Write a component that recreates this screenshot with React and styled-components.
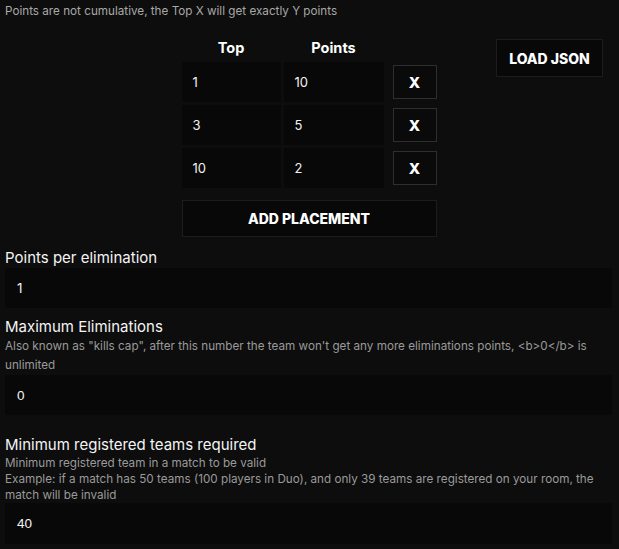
import React from 'react'
import styled, { createGlobalStyle } from 'styled-components'

const PLACEMENTS = [
  { top: 1, points: 10 },
  { top: 3, points: 5 },
  { top: 10, points: 2 },
]

const GlobalStyle = createGlobalStyle`
  html, body {
    margin: 0;
    background: #0d0d0d;
  }
  body {
    font-family: Inter, "Noto Sans", sans-serif;
    color: #eee;
  }
`

export default function App() {
  return (
    <>
      <GlobalStyle />
      <Wrapper>
        <Hint>Points are not cumulative, the Top X will get exactly Y points</Hint>

        <PlacementArea>
          <Table>
            <HeaderRow>
              <HeaderCell>Top</HeaderCell>
              <HeaderCell>Points</HeaderCell>
              <span />
            </HeaderRow>
            {PLACEMENTS.map((p, index) => (
              <Row key={index}>
                <Cell>{p.top}</Cell>
                <Cell>{p.points}</Cell>
                <RemoveButton>X</RemoveButton>
              </Row>
            ))}
            <AddButton>ADD PLACEMENT</AddButton>
          </Table>
          <LoadButton>LOAD JSON</LoadButton>
        </PlacementArea>

        <Field $gap="11px">
          <Label>Points per elimination</Label>
          <Input>1</Input>
        </Field>

        <Field $gap="9px">
          <Label>Maximum Eliminations</Label>
          <Help>
            Also known as "kills cap", after this number the team won't get any more
            eliminations points, &lt;b&gt;0&lt;/b&gt; is unlimited
          </Help>
          <Input $system>0</Input>
        </Field>

        <Field $gap="20px">
          <Label>Minimum registered teams required</Label>
          <Help $tight>
            Minimum registered team in a match to be valid
            <br />
            Example: if a match has 50 teams (100 players in Duo), and only 39 teams are
            registered on your room, the match will be invalid
          </Help>
          <Input $system $tall>40</Input>
        </Field>
      </Wrapper>
    </>
  )
}

const Wrapper = styled.div`
  width: 607px;
  padding: 4px 7px 0 5px;
`

const Hint = styled.div`
  font-size: 11.7px;
  line-height: 14px;
  color: #a8a8a8;
`

const PlacementArea = styled.div`
  display: grid;
  grid-template-columns: 1fr auto 1fr;
  margin-top: 18px;
`

const Table = styled.div`
  grid-column: 2;
  display: flex;
  flex-direction: column;
  gap: 3px;
  margin-left: 1px;
`

const HeaderRow = styled.div`
  display: grid;
  grid-template-columns: 99px 100px 50px;
  gap: 3px;
  height: 23px;
  align-items: center;
`

const HeaderCell = styled.div`
  text-align: center;
  font-weight: 700;
  font-size: 14.5px;
  color: #fff;
`

const Row = styled.div`
  display: grid;
  grid-template-columns: 99px 100px 50px;
  gap: 3px;
  height: 40px;
  align-items: center;
`

const Cell = styled.div`
  height: 40px;
  box-sizing: border-box;
  background: #080808;
  padding-left: 11px;
  display: flex;
  align-items: center;
  font-size: 13px;
  color: #f2f2f2;
`

const RemoveButton = styled.button`
  justify-self: end;
  width: 44px;
  height: 34px;
  background: #0a0a0a;
  border: 1px solid #2e2e2e;
  color: #fff;
  font-family: Inter, sans-serif;
  font-weight: 800;
  font-size: 15px;
  padding: 0;
`

const AddButton = styled.button`
  margin-top: 9px;
  width: 255px;
  height: 37px;
  background: #080808;
  border: 1px solid #1c1c1c;
  color: #fff;
  font-family: Inter, sans-serif;
  font-weight: 800;
  font-size: 14px;
`

const LoadButton = styled.button`
  grid-column: 3;
  justify-self: end;
  align-self: start;
  margin-top: 3px;
  margin-right: 9px;
  width: 107px;
  height: 38px;
  background: #080808;
  border: 1px solid #1c1c1c;
  color: #fff;
  font-family: Inter, sans-serif;
  font-weight: 800;
  font-size: 14px;
  padding: 0;
`

const Field = styled.div`
  margin-top: ${(p) => p.$gap};
`

const Label = styled.div`
  font-size: 15px;
  line-height: 20px;
  color: #f4f4f4;
`

const Help = styled.div`
  font-size: 11.7px;
  line-height: ${(p) => (p.$tight ? '16px' : '19px')};
  color: #9a9a9a;
`

const Input = styled.div`
  height: ${(p) => (p.$tall ? '41px' : '40px')};
  box-sizing: border-box;
  background: #080808;
  padding-left: 12px;
  display: flex;
  align-items: center;
  font-family: ${(p) => (p.$system ? '"Liberation Sans", Arial, sans-serif' : 'Inter, sans-serif')};
  font-size: 13.5px;
  color: #f2f2f2;
`
